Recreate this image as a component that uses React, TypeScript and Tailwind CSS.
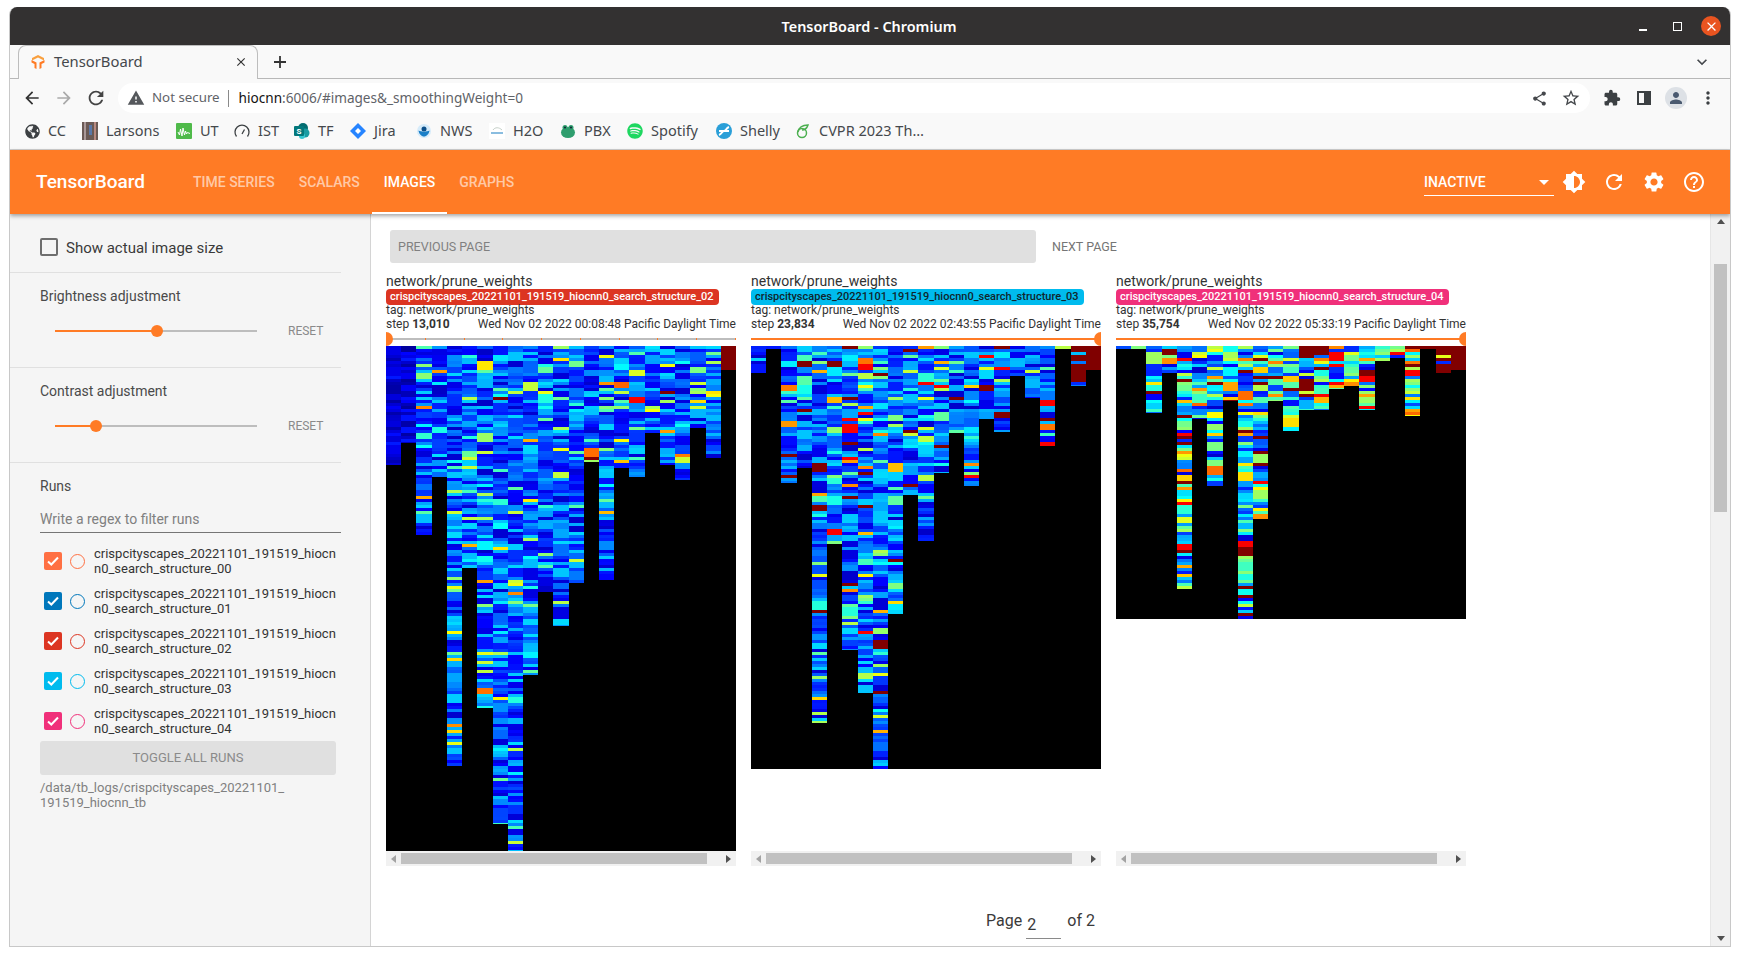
import { useMemo } from "react";
import {
  MdArrowBack,
  MdArrowForward,
  MdBrightness6,
  MdClose,
  MdExtension,
  MdHelpOutline,
  MdKeyboardArrowDown,
  MdMoreVert,
  MdPerson,
  MdRefresh,
  MdSettings,
  MdShare,
  MdStarBorder,
  MdWarning,
} from "react-icons/md";
import { FaGlobeAmericas, FaSpotify } from "react-icons/fa";

const UI_FONT = "font-['Noto_Sans','Open_Sans',sans-serif]";

// where each column of the weight maps stops, in px from the top of the image
const PLOTS = [
  {
    seed: 11,
    height: 505,
    ends: [119, 97, 189, 131, 420, 222, 362, 478, 505, 329, 246, 280, 237, 116, 234, 122, 131, 87, 119, 134, 82, 112, 24],
    mix: [0.88, 0.965, 0.992],
  },
  {
    seed: 29,
    height: 423,
    ends: [27, 3, 137, 122, 377, 198, 304, 347, 423, 268, 149, 195, 127, 87, 140, 73, 86, 30, 52, 100, 3, 40, 24],
    mix: [0.78, 0.9, 0.945],
  },
  {
    seed: 47,
    height: 273,
    ends: [3, 3, 67, 27, 243, 73, 140, 55, 273, 173, 55, 85, 64, 64, 43, 40, 64, 15, 12, 70, 3, 27, 24],
    mix: [0.38, 0.72, 0.86],
  },
];

const RUNS = [
  { name: "00", box: "bg-[#ff7043]", ring: "border-[#ff7043]" },
  { name: "01", box: "bg-[#0077bb]", ring: "border-[#0077bb]" },
  { name: "02", box: "bg-[#dc3522]", ring: "border-[#dc3522]" },
  { name: "03", box: "bg-[#00bbee]", ring: "border-[#00bbee]" },
  { name: "04", box: "bg-[#f0307a]", ring: "border-[#f0307a]" },
];

const CARDS = [
  {
    run: "02",
    pill: "bg-[#dc3522] text-white",
    step: "13,010",
    time: "Wed Nov 02 2022 00:08:48 Pacific Daylight Time",
    atEnd: false,
  },
  {
    run: "03",
    pill: "bg-[#00bbee] text-[#10252c]",
    step: "23,834",
    time: "Wed Nov 02 2022 02:43:55 Pacific Daylight Time",
    atEnd: true,
  },
  {
    run: "04",
    pill: "bg-[#f0307a] text-white",
    step: "35,754",
    time: "Wed Nov 02 2022 05:33:19 Pacific Daylight Time",
    atEnd: true,
  },
];

const clamp = (n: number) => Math.max(0, Math.min(1, n));

const jet = (v: number) => {
  const r = clamp(1.5 - Math.abs(4 * v - 3));
  const g = clamp(1.5 - Math.abs(4 * v - 2));
  const b = clamp(1.5 - Math.abs(4 * v - 1));
  return `rgb(${Math.round(r * 255)},${Math.round(g * 255)},${Math.round(b * 255)})`;
};

const makeRng = (seed: number) => {
  let s = seed;
  return () => {
    s = (s + 0x6d2b79f5) | 0;
    let t = Math.imul(s ^ (s >>> 15), 1 | s);
    t = (t + Math.imul(t ^ (t >>> 7), 61 | t)) ^ t;
    return ((t ^ (t >>> 14)) >>> 0) / 4294967296;
  };
};

const Heatmap = ({ plot }: { plot: (typeof PLOTS)[number] }) => {
  const cells = useMemo(() => {
    const rng = makeRng(plot.seed);
    const out: { x: number; y: number; w: number; h: number; fill: string }[] = [];
    plot.ends.forEach((end, col) => {
      const x = Math.round((col * 350) / 23);
      const w = Math.round(((col + 1) * 350) / 23) - x;
      let y = 0;
      while (y < end) {
        const hold = rng() < 0.8 ? 3 : rng() < 0.75 ? 6 : 9;
        const h = Math.min(hold, end - y);
        const r = rng();
        let v = 0.07 + 0.27 * rng();
        if (r > plot.mix[2]) v = rng() < 0.75 ? 1 : 0.88;
        else if (r > plot.mix[1]) v = 0.58 + 0.2 * rng();
        else if (r > plot.mix[0]) v = 0.34 + 0.24 * rng();
        if (plot.seed === 11 && col < 2) v = 0.03 + 0.12 * rng();
        if (col === 22) v = 1;
        if (col === 21 && plot.seed !== 11) v = rng() < 0.7 ? 1 : v;
        out.push({ x, y, w, h, fill: jet(v) });
        y += h;
      }
    });
    return out;
  }, [plot]);

  return (
    <svg
      width="350"
      height={plot.height}
      viewBox={`0 0 350 ${plot.height}`}
      shapeRendering="crispEdges"
      className="block bg-black"
    >
      {cells.map((c) => (
        <rect key={`${c.x}-${c.y}`} x={c.x} y={c.y} width={c.w} height={c.h} fill={c.fill} />
      ))}
    </svg>
  );
};

const HScrollbar = () => (
  <div className="flex h-[15px] w-[350px] items-center bg-[#f1f1f1]">
    <div className="flex w-[15px] justify-center">
      <div className="h-0 w-0 border-y-[4px] border-r-[5px] border-y-transparent border-r-[#a3a3a3]" />
    </div>
    <div className="h-[11px] w-[306px] bg-[#c1c1c1]" />
    <div className="flex flex-1 justify-end pr-[5px]">
      <div className="h-0 w-0 border-y-[4px] border-l-[5px] border-y-transparent border-l-[#505050]" />
    </div>
  </div>
);

const StepSlider = ({ atEnd }: { atEnd: boolean }) => (
  <div className="relative -mb-[1px] flex h-[16px] items-center overflow-hidden">
    <div className={atEnd ? "h-[2px] w-full bg-[#ff7b25]" : "flex h-[2px] w-full justify-between bg-[#bdbdbd]"}>
      {!atEnd &&
        [0, 1, 2, 3, 4, 5, 6, 7, 8, 9].map((t) => <div key={t} className="h-[2px] w-[1px] bg-[#ff7b25]" />)}
    </div>
    <div
      className={
        atEnd
          ? "absolute right-[-7px] top-[1px] h-[14px] w-[14px] rounded-full bg-[#ff7b25]"
          : "absolute left-[-7px] top-[1px] h-[14px] w-[14px] rounded-full bg-[#ff7b25]"
      }
    />
  </div>
);

const ImageCard = ({ card, plot }: { card: (typeof CARDS)[number]; plot: (typeof PLOTS)[number] }) => (
  <div className="w-[350px] text-[#333]">
    <div className="h-[16px] whitespace-nowrap text-[14px] leading-[16px]">network/prune_weights</div>
    <div className="flex h-[16px]">
      <div className={`h-[16px] whitespace-nowrap rounded-[4px] pl-[4px] pr-[5px] text-[11px] font-medium leading-[16px] ${card.pill}`}>
        crispcityscapes_20221101_191519_hiocnn0_search_structure_{card.run}
      </div>
    </div>
    <div className="-mt-[1px] h-[13px] whitespace-nowrap text-[12px] leading-[13px]">tag: network/prune_weights</div>
    <div className="flex h-[14px] justify-between whitespace-nowrap text-[12px] leading-[14px]">
      <span>
        step <b className="font-bold">{card.step}</b>
      </span>
      <span>{card.time}</span>
    </div>
    <StepSlider atEnd={card.atEnd} />
    <div className="h-[505px]">
      <Heatmap plot={plot} />
    </div>
    <HScrollbar />
  </div>
);

const Favicon = () => (
  <svg width="16" height="16" viewBox="0 0 16 16">
    <path d="M8 1l6 3v2.500L8 3.500 2 6.500V4z" fill="#f9a03f" />
    <path d="M1.500 6l5 2.500V15l-2-1v-4l-3-1.500zM14.500 6l-5 2.500V15l2-1v-4l3-1.500z" fill="#ff7b25" />
  </svg>
);

const Bookmark = ({ width, label, icon }: { width: string; label: string; icon: React.ReactNode }) => (
  <div className={`flex h-[16px] shrink-0 items-center gap-[8px] ${width}`}>
    <span className="flex h-[16px] w-[16px] shrink-0 items-center justify-center">{icon}</span>
    <span className="whitespace-nowrap text-[14.500px] text-[#45484c]">{label}</span>
  </div>
);

const BOOKMARKS = [
  { width: "w-[58px]", label: "CC", icon: <FaGlobeAmericas size={15} className="text-[#3c4043]" /> },
  {
    width: "w-[94px]",
    label: "Larsons",
    icon: (
      <svg width="16" height="18" viewBox="0 0 16 18">
        <rect width="16" height="18" fill="#6b5a55" />
        <rect x="2" width="2" height="18" fill="#a99" />
        <rect x="7" y="3" width="3" height="10" fill="#5a78a8" />
        <rect x="12" width="2" height="18" fill="#b98a80" />
      </svg>
    ),
  },
  {
    width: "w-[58px]",
    label: "UT",
    icon: (
      <svg width="16" height="16" viewBox="0 0 16 16">
        <rect width="16" height="16" rx="1" fill="#4fba4a" />
        <path d="M2 9l1.500 3 1-6 1.500 7 1-8 1.500 7 1-4 1 3 1-1.500 2.500 1" fill="none" stroke="#fff" strokeWidth="1" />
      </svg>
    ),
  },
  {
    width: "w-[60px]",
    label: "IST",
    icon: (
      <svg width="16" height="16" viewBox="0 0 16 16" fill="none" stroke="#3c4043" strokeWidth="1.300">
        <path d="M2.500 13.500a7 7 0 1 1 11 0" />
        <path d="M8 11l2.500-4.500" />
      </svg>
    ),
  },
  {
    width: "w-[56px]",
    label: "TF",
    icon: (
      <svg width="16" height="16" viewBox="0 0 16 16">
        <circle cx="9" cy="5" r="5" fill="#036c70" />
        <circle cx="11" cy="10" r="4.500" fill="#1a9ba1" />
        <circle cx="8" cy="13" r="3" fill="#37c6d0" />
        <rect y="3" width="10" height="10" rx="1" fill="#03787c" />
        <text x="5" y="11" textAnchor="middle" fontSize="8" fontWeight="700" fill="#fff" fontFamily="Roboto">
          S
        </text>
      </svg>
    ),
  },
  {
    width: "w-[66px]",
    label: "Jira",
    icon: (
      <svg width="16" height="16" viewBox="0 0 16 16">
        <path d="M8 0l8 8-8 8-8-8z" fill="#2684ff" />
        <path d="M8 5l3 3-3 3-3-3z" fill="#fff" />
      </svg>
    ),
  },
  {
    width: "w-[73px]",
    label: "NWS",
    icon: (
      <svg width="16" height="16" viewBox="0 0 16 16">
        <circle cx="8" cy="8" r="7" fill="#d5ebfa" />
        <path d="M2.500 7.500c2.500 1.500 8.500 1.500 11 0-.5 3.500-3 6-5.500 6s-5-2.500-5.500-6z" fill="#1a7fc8" />
        <circle cx="8" cy="6" r="2.500" fill="#0b4f8a" />
      </svg>
    ),
  },
  {
    width: "w-[71px]",
    label: "H2O",
    icon: (
      <svg width="16" height="16" viewBox="0 0 16 16">
        <rect width="16" height="16" fill="#fff" />
        <path d="M4 7c2-3 6-3 9 0" fill="none" stroke="#c5d0c8" strokeWidth="1" />
        <rect x="2" y="9" width="12" height="2" fill="#8abde0" />
      </svg>
    ),
  },
  {
    width: "w-[67px]",
    label: "PBX",
    icon: (
      <svg width="16" height="16" viewBox="0 0 16 16">
        <ellipse cx="8" cy="9.500" rx="7" ry="5.500" fill="#2f9e6e" />
        <circle cx="5" cy="4.500" r="2.500" fill="#2f9e6e" />
        <circle cx="11" cy="4.500" r="2.500" fill="#2f9e6e" />
        <circle cx="5" cy="4.500" r="1" fill="#123" />
        <circle cx="11" cy="4.500" r="1" fill="#123" />
      </svg>
    ),
  },
  { width: "w-[89px]", label: "Spotify", icon: <FaSpotify size={16} className="text-[#1ed760]" /> },
  {
    width: "w-[79px]",
    label: "Shelly",
    icon: (
      <svg width="16" height="16" viewBox="0 0 16 16">
        <circle cx="8" cy="8" r="8" fill="#2a9fd8" />
        <path d="M3 8h5c2 0 2-3 5-4M13 8H8c-2 0-2 3-5 4" fill="none" stroke="#fff" strokeWidth="2" />
      </svg>
    ),
  },
  {
    width: "w-[140px]",
    label: "CVPR 2023 Th…",
    icon: (
      <svg width="16" height="16" viewBox="0 0 16 16" fill="none" stroke="#4caf50" strokeWidth="1.500">
        <circle cx="7" cy="10" r="4.500" />
        <path d="M3 9c1-5 5-7 10-7-1 3-3 5-6 5" />
      </svg>
    ),
  },
];

const AdjustSlider = ({ fill, label }: { fill: string; label: string }) => (
  <div className="flex h-[95px] flex-col border-b border-[#e0e0e0] pl-[30px] pt-[13px]">
    <div className="text-[14px] leading-[20px] text-[#4a4a4a]">{label}</div>
    <div className="mt-[10px] flex h-[30px] items-center">
      <div className="relative ml-[15px] flex h-[2px] w-[202px] bg-[#bdbdbd]">
        <div className={`h-[2px] bg-[#ff7b25] ${fill}`} />
        <div className="-ml-[6px] -mt-[5px] h-[12px] w-[12px] rounded-full bg-[#ff7b25]" />
      </div>
      <div className="ml-[31px] text-[12px] text-[#8a8a8a]">RESET</div>
    </div>
  </div>
);

const Sidebar = () => (
  <aside className="w-[361px] shrink-0 border-r border-[#d4d4d4] bg-[#f5f5f5] pr-[29px]">
    <div className="flex h-[59px] items-start gap-[8px] border-b border-[#e0e0e0] pl-[30px] pt-[24px]">
      <div className="h-[18px] w-[18px] rounded-[2px] border-2 border-[#6e6e6e]" />
      <div className="pt-[1px] text-[15px] leading-[18px] text-[#3a3a3a]">Show actual image size</div>
    </div>
    <AdjustSlider label="Brightness adjustment" fill="w-[102px]" />
    <AdjustSlider label="Contrast adjustment" fill="w-[41px]" />
    <div className="pl-[30px] pt-[13px]">
      <div className="text-[14px] leading-[20px] text-[#4a4a4a]">Runs</div>
      <div className="mt-[12px] h-[25px] border-b border-[#757575] text-[14px] leading-[22px] text-[#808080]">
        Write a regex to filter runs
      </div>
      <div className="mt-[13px] flex flex-col gap-[10px]">
        {RUNS.map((run) => (
          <div key={run.name} className="flex h-[30px] items-center pl-[4px]">
            <div className={`flex h-[18px] w-[18px] shrink-0 items-center justify-center rounded-[2px] ${run.box}`}>
              <svg width="14" height="14" viewBox="0 0 14 14" fill="none" stroke="#fff" strokeWidth="2">
                <path d="M2 7.500l3.300 3L12 3.500" />
              </svg>
            </div>
            <div className={`ml-[8px] h-[15px] w-[15px] shrink-0 rounded-full border-[1.5px] ${run.ring}`} />
            <div className="ml-[9px] w-[242px] break-all text-[13px] leading-[15px] text-[#333]">
              crispcityscapes_20221101_191519_hiocnn0_search_structure_{run.name}
            </div>
          </div>
        ))}
      </div>
      <div className="mt-[5px] flex h-[34px] w-[296px] items-center justify-center rounded-[3px] bg-[#e0e0e0] text-[13px] text-[#8a8a8a]">
        TOGGLE ALL RUNS
      </div>
      <div className="mt-[5px] w-[290px] break-all text-[13px] leading-[15px] text-[#808080]">
        /data/tb_logs/crispcityscapes_20221101_
        <br />
        191519_hiocnn_tb
      </div>
    </div>
  </aside>
);

const Gallery = () => (
  <main className="min-w-0 flex-1 overflow-hidden bg-white pl-[15px] pt-[16px]">
    <div className="ml-[4px] flex items-center">
      <div className="flex h-[33px] w-[646px] items-center rounded-[3px] bg-[#e0e0e0] pl-[8px] pt-[1px] text-[12.5px] text-[#808080]">
        PREVIOUS PAGE
      </div>
      <div className="ml-[16px] pt-[1px] text-[12.5px] text-[#757575]">NEXT PAGE</div>
    </div>
    <div className="mt-[10px] flex gap-[15px]">
      {CARDS.map((card, i) => (
        <ImageCard key={card.run} card={card} plot={PLOTS[i]} />
      ))}
    </div>
    <div className="-ml-[15px] mt-[45px] flex items-start justify-center text-[16px] leading-[20px] text-[#3a3a3a]">
      <span>Page</span>
      <div className="ml-[4px] h-[28px] w-[35px] border-b border-[#8a8a8a] pl-[1px] pt-[4px]">2</div>
      <span className="ml-[6px]">of 2</span>
    </div>
  </main>
);

const PageScrollbar = () => (
  <div className="flex w-[20px] shrink-0 flex-col items-center border-l border-[#e6e6e6] bg-[#f1f1f1] pb-[5px] pt-[5px]">
    <div className="h-0 w-0 border-x-[4px] border-b-[5px] border-x-transparent border-b-[#505050]" />
    <div className="mt-[40px] h-[248px] w-[13px] bg-[#c1c1c1]" />
    <div className="mt-auto h-0 w-0 border-x-[4px] border-t-[5px] border-x-transparent border-t-[#505050]" />
  </div>
);

const HeaderBar = () => (
  <header className="relative z-10 flex h-[64px] shrink-0 items-center bg-[#ff7b25] font-['Roboto',sans-serif] text-white shadow-[0_2px_4px_rgba(0,0,0,0.35)]">
    <div className="w-[171px] shrink-0 pl-[26px] text-[19px] font-medium">TensorBoard</div>
    <nav className="flex h-full text-[14px] font-medium">
      <div className="flex items-center px-[12px] text-white/60">TIME SERIES</div>
      <div className="flex items-center px-[12px] text-white/60">SCALARS</div>
      <div className="flex items-center border-b-2 border-white px-[12px] pt-[2px]">IMAGES</div>
      <div className="flex items-center px-[12px] text-white/60">GRAPHS</div>
    </nav>
    <div className="ml-auto flex items-center pr-[16px]">
      <div className="mt-[2px] flex h-[26px] w-[130px] items-center justify-between border-b border-white text-[14px] font-medium">
        <span className="-mt-[1px]">INACTIVE</span>
        <span className="mr-[5px] h-0 w-0 border-x-[5px] border-t-[5px] border-x-transparent border-t-white" />
      </div>
      <div className="flex w-[40px] justify-center">
        <MdBrightness6 size={24} />
      </div>
      <div className="flex w-[40px] justify-center">
        <MdRefresh size={24} />
      </div>
      <div className="flex w-[40px] justify-center">
        <MdSettings size={24} />
      </div>
      <div className="flex w-[40px] justify-center">
        <MdHelpOutline size={24} />
      </div>
    </div>
  </header>
);

const BrowserChrome = () => (
  <div className={`shrink-0 ${UI_FONT}`}>
    {/* title bar */}
    <div className="flex h-[38px] items-center bg-[#333131] text-white">
      <div className="flex-1" />
      <div className="pt-[1px] text-[14.400px] font-semibold">TensorBoard - Chromium</div>
      <div className="flex flex-1 items-center justify-end pr-[2px]">
        <div className="flex w-[34px] justify-center">
          <div className="mt-[8px] h-[1.5px] w-[8px] bg-white" />
        </div>
        <div className="flex w-[34px] justify-center">
          <div className="h-[9px] w-[9px] border border-white" />
        </div>
        <div className="flex w-[34px] justify-center">
          <div className="flex h-[20px] w-[20px] items-center justify-center rounded-full bg-[#e95420]">
            <MdClose size={15} />
          </div>
        </div>
      </div>
    </div>
    {/* tab strip */}
    <div className="flex h-[34px] items-start border-b border-[#b8b8b8] bg-[#f9f9f9]">
      <div className="relative ml-[8px] flex h-[34px] w-[240px] items-center rounded-t-[8px] border-x border-t border-[#bdbdbd] bg-[#f9f9f9] pb-[2px] pl-[11px]">
        <Favicon />
        <span className="ml-[8px] text-[14.800px] text-[#45484c]">TensorBoard</span>
        <MdClose size={14} className="ml-auto mr-[9px] text-[#333]" />
      </div>
      <svg width="14" height="14" viewBox="0 0 14 14" className="ml-[15px] mt-[10px]" stroke="#333" strokeWidth="1.800">
        <path d="M7 1v12M1 7h12" />
      </svg>
      <MdKeyboardArrowDown size={20} className="ml-auto mr-[18px] mt-[7px] text-[#45484c]" />
    </div>
    {/* toolbar */}
    <div className="flex h-[38px] items-center bg-[#f9f9f9] pl-[6px]">
      <div className="flex w-[32px] justify-center">
        <MdArrowBack size={20} className="text-[#333]" />
      </div>
      <div className="flex w-[32px] justify-center">
        <MdArrowForward size={20} className="text-[#aaa]" />
      </div>
      <div className="flex w-[32px] justify-center">
        <MdRefresh size={22} className="text-[#444]" />
      </div>
      <div className="ml-[6px] flex h-[30px] w-[1472px] items-center rounded-full bg-white pl-[9px] pr-[9px]">
        <MdWarning size={18} className="text-[#55585c]" />
        <span className="ml-[7px] text-[13.300px] text-[#5f6368]">Not secure</span>
        <span className="ml-[8px] h-[17px] w-[1px] bg-[#8a8a8a]" />
        <span className="ml-[10px] text-[13.600px] text-[#5f6368]">
          <span className="text-[#111]">hiocnn</span>:6006/#images&_smoothingWeight=0
        </span>
        <MdShare size={17} className="ml-auto text-[#45484c]" />
        <MdStarBorder size={20} className="ml-[13px] text-[#45484c]" />
      </div>
      <div className="ml-[6px] flex w-[32px] justify-center">
        <MdExtension size={18} className="text-[#3c4043]" />
      </div>
      <div className="flex w-[32px] justify-center">
        <div className="flex h-[14px] w-[14px] justify-end border-2 border-[#3c4043]">
          <div className="h-full w-[5px] bg-[#3c4043]" />
        </div>
      </div>
      <div className="flex w-[32px] justify-center">
        <div className="flex h-[22px] w-[22px] items-center justify-center rounded-full bg-[#dde1e6]">
          <MdPerson size={18} className="text-[#4a5a70]" />
        </div>
      </div>
      <div className="flex w-[32px] justify-center">
        <MdMoreVert size={20} className="text-[#3c4043]" />
      </div>
    </div>
    {/* bookmarks */}
    <div className="flex h-[33px] items-center border-b border-[#cfcfcf] bg-[#f9f9f9] pb-[4px] pl-[14px]">
      {BOOKMARKS.map((b) => (
        <Bookmark key={b.label} width={b.width} label={b.label} icon={b.icon} />
      ))}
    </div>
  </div>
);

export default function App() {
  return (
    <div className="h-[956px] w-[1740px] overflow-hidden bg-white px-[9px] pt-[7px]">
      <div className="flex h-[940px] flex-col overflow-hidden rounded-t-[8px] border-x border-b border-[#c8c8c8]">
        <BrowserChrome />
        <HeaderBar />
        <div className="flex min-h-0 flex-1 font-['Roboto',sans-serif]">
          <Sidebar />
          <Gallery />
          <PageScrollbar />
        </div>
      </div>
    </div>
  );
}
